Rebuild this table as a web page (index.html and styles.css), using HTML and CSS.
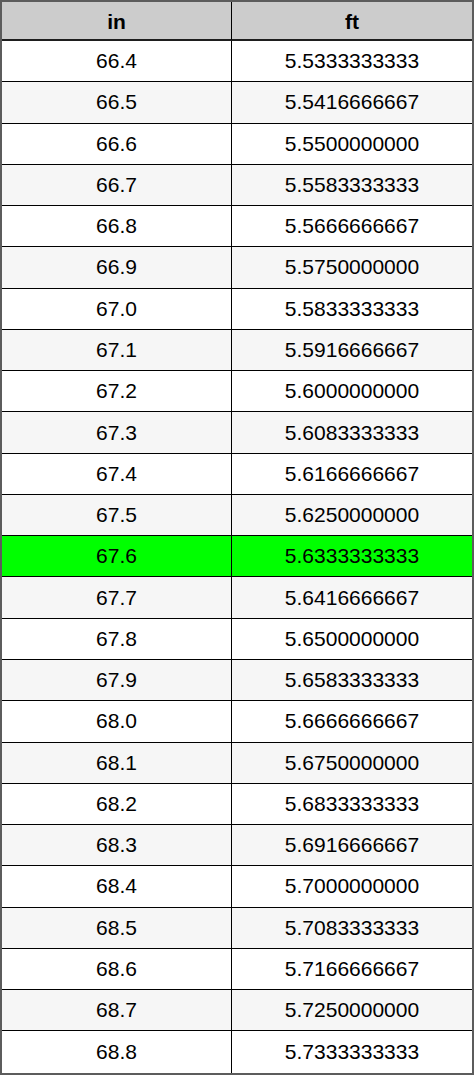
FILE: index.html
```html
<!DOCTYPE html>
<html lang="en">
<head>
<meta charset="utf-8">
<title>in to ft</title>
<link rel="stylesheet" href="styles.css">
</head>
<body>
<table class="conv">
<thead>
<tr class="head"><th>in</th><th>ft</th></tr>
</thead>
<tbody>
<tr><td>66.4</td><td>5.5333333333</td></tr>
<tr class="alt"><td>66.5</td><td>5.5416666667</td></tr>
<tr><td>66.6</td><td>5.5500000000</td></tr>
<tr class="alt"><td>66.7</td><td>5.5583333333</td></tr>
<tr><td>66.8</td><td>5.5666666667</td></tr>
<tr class="alt"><td>66.9</td><td>5.5750000000</td></tr>
<tr><td>67.0</td><td>5.5833333333</td></tr>
<tr class="alt"><td>67.1</td><td>5.5916666667</td></tr>
<tr><td>67.2</td><td>5.6000000000</td></tr>
<tr class="alt"><td>67.3</td><td>5.6083333333</td></tr>
<tr><td>67.4</td><td>5.6166666667</td></tr>
<tr class="alt"><td>67.5</td><td>5.6250000000</td></tr>
<tr class="hl"><td>67.6</td><td>5.6333333333</td></tr>
<tr class="alt"><td>67.7</td><td>5.6416666667</td></tr>
<tr><td>67.8</td><td>5.6500000000</td></tr>
<tr class="alt"><td>67.9</td><td>5.6583333333</td></tr>
<tr><td>68.0</td><td>5.6666666667</td></tr>
<tr class="alt"><td>68.1</td><td>5.6750000000</td></tr>
<tr><td>68.2</td><td>5.6833333333</td></tr>
<tr class="alt"><td>68.3</td><td>5.6916666667</td></tr>
<tr><td>68.4</td><td>5.7000000000</td></tr>
<tr class="alt"><td>68.5</td><td>5.7083333333</td></tr>
<tr><td>68.6</td><td>5.7166666667</td></tr>
<tr class="alt"><td>68.7</td><td>5.7250000000</td></tr>
<tr><td>68.8</td><td>5.7333333333</td></tr>
</tbody>
</table>
</body>
</html>
```
FILE: styles.css
```css
html, body {
  margin: 0;
  padding: 0;
  background: #ffffff;
}
.conv {
  width: 474px;
  border-collapse: separate;
  border-spacing: 0;
  border: 2px solid #5c5c5c;
  font-family: "Liberation Sans", Arial, sans-serif;
  font-size: 21px;
  color: #000;
  table-layout: fixed;
}
.conv th, .conv td {
  padding: 0;
  text-align: center;
  vertical-align: middle;
  line-height: 24px;
}
.conv th:first-child, .conv td:first-child {
  width: 229px;
  border-right: 1px solid #000;
}
.head {
  height: 39px;
  background: #cccccc;
}
.head th {
  font-weight: bold;
  padding-top: 2px;
  border-bottom: 2px solid #1e1e1e;
}
tbody tr {
  height: 41.28px;
  background: #ffffff;
}
tbody td {
  border-bottom: 1px solid #000;
}
tbody tr:last-child td {
  border-bottom: none;
}
tbody tr.alt {
  background: #f6f6f6;
}
tbody tr.hl {
  background: #00ff00;
}
```
